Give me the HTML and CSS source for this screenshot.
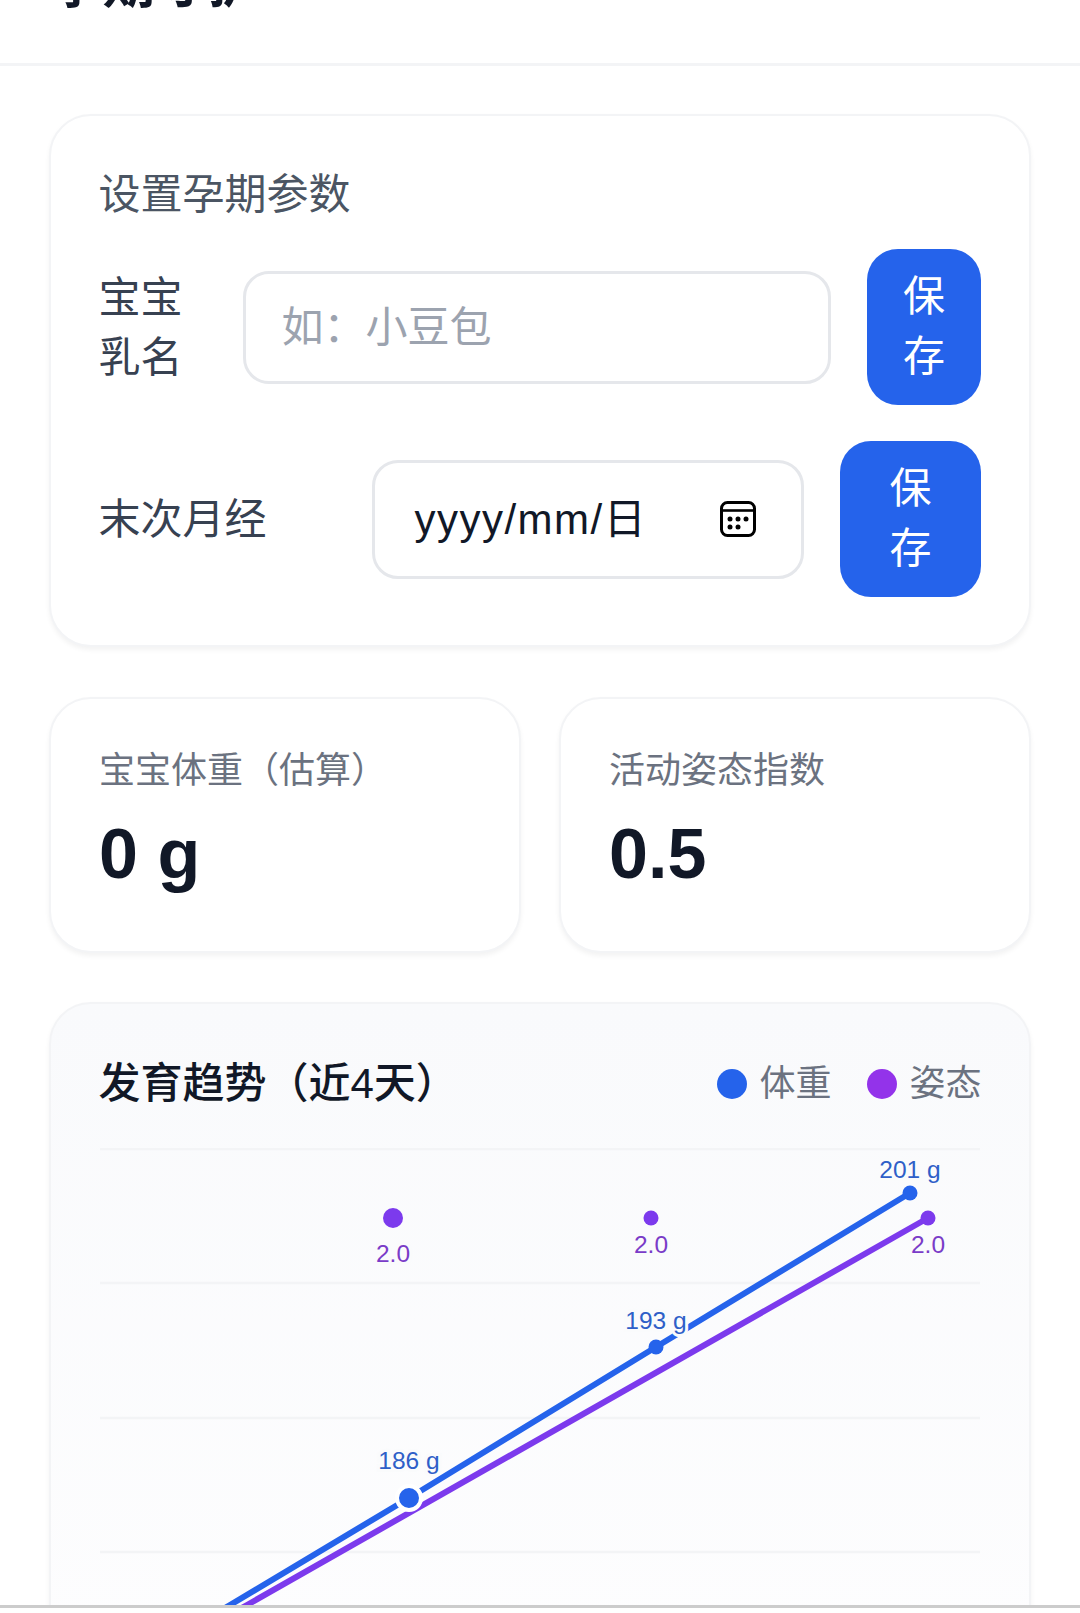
FILE: index.html
```html
<!DOCTYPE html>
<html lang="zh-CN">
<head>
    <meta charset="UTF-8">
    <meta name="viewport" content="width=device-width, initial-scale=1.0">
    <title>孕期守护</title>
    <link rel="stylesheet" href="styles.css">
</head>
<body>
    <div class="page">
        <header class="header">
            <h1>孕期守护</h1>
        </header>

        <main class="content">
            <section class="card settings">
                <h2 class="settings-title">设置孕期参数</h2>
                <div class="form-row">
                    <label class="label label-name" for="babyName">宝宝乳名</label>
                    <input class="field field-name" type="text" id="babyName" placeholder="如：小豆包">
                    <button class="btn btn-name" type="button">保存</button>
                </div>
                <div class="form-row form-row-date">
                    <span class="label label-date">末次月经</span>
                    <div class="field field-date">
                        <span class="date-text">yyyy/mm/日</span>
                        <svg class="date-icon" viewBox="0 0 36 36" width="36" height="36">
                            <rect x="1.5" y="1.5" width="33" height="33" rx="6" fill="none" stroke="#000" stroke-width="3"/>
                            <path d="M2 9.5h32" stroke="#000" stroke-width="2.6"/>
                            <circle cx="10" cy="18" r="2.5"/>
                            <circle cx="18" cy="18" r="2.5"/>
                            <circle cx="26" cy="18" r="2.5"/>
                            <circle cx="10" cy="26" r="2.5"/>
                            <circle cx="18" cy="26" r="2.5"/>
                        </svg>
                    </div>
                    <button class="btn btn-date" type="button">保存</button>
                </div>
            </section>

            <section class="stats">
                <div class="card stat">
                    <p class="stat-label">宝宝体重（估算）</p>
                    <p class="stat-value">0 g</p>
                </div>
                <div class="card stat">
                    <p class="stat-label">活动姿态指数</p>
                    <p class="stat-value">0.5</p>
                </div>
            </section>

            <section class="card chart-card">
                <div class="chart-head">
                    <h2 class="chart-title">发育趋势（近4天）</h2>
                    <div class="legend">
                        <span class="legend-item"><i class="dot dot-blue"></i>体重</span>
                        <span class="legend-item"><i class="dot dot-purple"></i>姿态</span>
                    </div>
                </div>
                <svg class="chart" viewBox="0 0 880 500" width="880" height="500">
                    <g class="grid">
                        <line x1="0" y1="1" x2="880" y2="1"/>
                        <line x1="0" y1="135" x2="880" y2="135"/>
                        <line x1="0" y1="270" x2="880" y2="270"/>
                        <line x1="0" y1="404" x2="880" y2="404"/>
                    </g>
                    <polyline class="line-purple" points="828,70 147,457 60,506"/>
                    <polyline class="line-blue" points="810,45 556,199 309,350 130,457 40,511"/>
                    <circle class="pt-blue halo" cx="309" cy="350" r="12"/>
                    <circle class="pt-blue" cx="556" cy="199" r="7.5"/>
                    <circle class="pt-blue" cx="810" cy="45" r="7.5"/>
                    <circle class="pt-purple" cx="293" cy="70" r="10"/>
                    <circle class="pt-purple" cx="551" cy="70" r="7.5"/>
                    <circle class="pt-purple" cx="828" cy="70" r="7.5"/>
                    <text class="val-blue" x="810" y="30">201 g</text>
                    <text class="val-blue" x="556" y="181">193 g</text>
                    <text class="val-blue" x="309" y="321">186 g</text>
                    <text class="val-purple" x="293" y="114">2.0</text>
                    <text class="val-purple" x="551" y="105">2.0</text>
                    <text class="val-purple" x="828" y="105">2.0</text>
                </svg>
            </section>
        </main>

        <div class="bottom-bar"></div>
    </div>
</body>
</html>
```

FILE: styles.css
```css
* {
    margin: 0;
    padding: 0;
    box-sizing: border-box;
    font-family: "Liberation Sans", "Noto Sans CJK SC", sans-serif;
}

body {
    background: white;
}

.page {
    height: 1613px;
    display: flex;
    flex-direction: column;
    overflow: hidden;
}

.header {
    flex: none;
    height: 66px;
    padding: 0 50px 52px;
    display: flex;
    align-items: flex-end;
    overflow: hidden;
    border-bottom: 3px solid #f3f4f6;
}

.header h1 {
    font-size: 52.5px;
    line-height: 52.5px;
    font-weight: 700;
    color: #111827;
}

.content {
    flex: 1;
    min-height: 0;
    overflow: hidden;
    padding: 48px 49px 0;
}

.card {
    background: white;
    border: 2.6px solid #f3f4f6;
    border-radius: 42px;
    box-shadow: 0 3px 5px rgba(0,0,0,0.05);
}

.settings {
    padding: 49px 48px 48px 47.4px;
    margin-bottom: 50px;
}

.settings-title {
    font-size: 42px;
    line-height: 56px;
    font-weight: 400;
    color: #4b5563;
    margin-top: 2px;
    margin-bottom: 26px;
}

.form-row {
    display: flex;
    align-items: center;
    margin-bottom: 36px;
}

.form-row-date {
    margin-bottom: 0;
}

.label {
    flex: none;
    font-size: 42px;
    line-height: 60px;
    padding-top: 2px;
    color: #374151;
}

.label-name {
    width: 84px;
    margin-right: 61px;
}

.label-date {
    width: 168px;
    margin-right: 106px;
}

.field {
    flex: 1;
    min-width: 0;
    background: white;
    border: 3px solid #e5e7eb;
    border-radius: 26px;
    font-size: 42px;
    color: #111827;
}

.field-name {
    height: 113px;
    padding: 2px 35px 0;
}

.field-name::placeholder {
    color: #9ca3af;
}

.field-date {
    height: 119px;
    padding: 0 45px 0 39px;
    display: flex;
    align-items: center;
    justify-content: space-between;
}

.date-text {
    color: #111827;
    letter-spacing: 1.5px;
    padding-bottom: 8px;
}

.date-icon {
    flex: none;
}

.btn {
    flex: none;
    height: 156px;
    margin-left: 36px;
    border: none;
    border-radius: 31px;
    background: #2563eb;
    color: white;
    font-size: 42px;
    line-height: 60px;
    cursor: pointer;
}

.btn-name {
    width: 114px;
    padding: 0 36px;
}

.btn-date {
    width: 141px;
    padding: 0 49px;
}

.stats {
    display: grid;
    grid-template-columns: 1fr 1fr;
    gap: 38px;
    margin-bottom: 49px;
}

.stat {
    height: 256px;
    padding: 47px 48px 0;
}

.stat-label {
    font-size: 36px;
    line-height: 50px;
    color: #6b7280;
}

.stat-value {
    margin-top: 16px;
    font-size: 70px;
    line-height: 84px;
    font-weight: 700;
    color: #111827;
}

.chart-card {
    background: linear-gradient(#f9fafc, #fdfdfe);
    padding: 50px 47.4px 0;
}

.chart-head {
    display: flex;
    justify-content: space-between;
    align-items: center;
    margin-bottom: 34px;
}

.chart-title {
    font-size: 42px;
    line-height: 60px;
    font-weight: 500;
    color: #111827;
}

.legend {
    display: flex;
    gap: 35px;
}

.legend-item {
    display: flex;
    align-items: center;
    gap: 13px;
    font-size: 36px;
    line-height: 50px;
    color: #6b7280;
}

.dot {
    width: 30px;
    height: 30px;
    border-radius: 50%;
}

.dot-blue {
    background: #2563eb;
}

.dot-purple {
    background: #9333ea;
}

.chart {
    display: block;
    margin-left: 2px;
}

.grid line {
    stroke: #f3f4f6;
    stroke-width: 2.6;
}

.line-blue, .line-purple {
    fill: none;
    stroke-width: 6;
}

.line-blue {
    stroke: #2563eb;
}

.line-purple {
    stroke: #7c3aed;
}

.pt-blue {
    fill: #2563eb;
}

.pt-purple {
    fill: #7c3aed;
}

.halo {
    stroke: white;
    stroke-width: 4;
}

.val-blue, .val-purple {
    font-size: 24.5px;
    text-anchor: middle;
    paint-order: stroke;
    stroke: #fafbfc;
    stroke-width: 6px;
}

.val-blue {
    fill: #2e5fc8;
}

.val-purple {
    fill: #7a3cc8;
}

.bottom-bar {
    flex: none;
    height: 8px;
    border-top: 3px solid #cccccc;
    background: white;
}
```
